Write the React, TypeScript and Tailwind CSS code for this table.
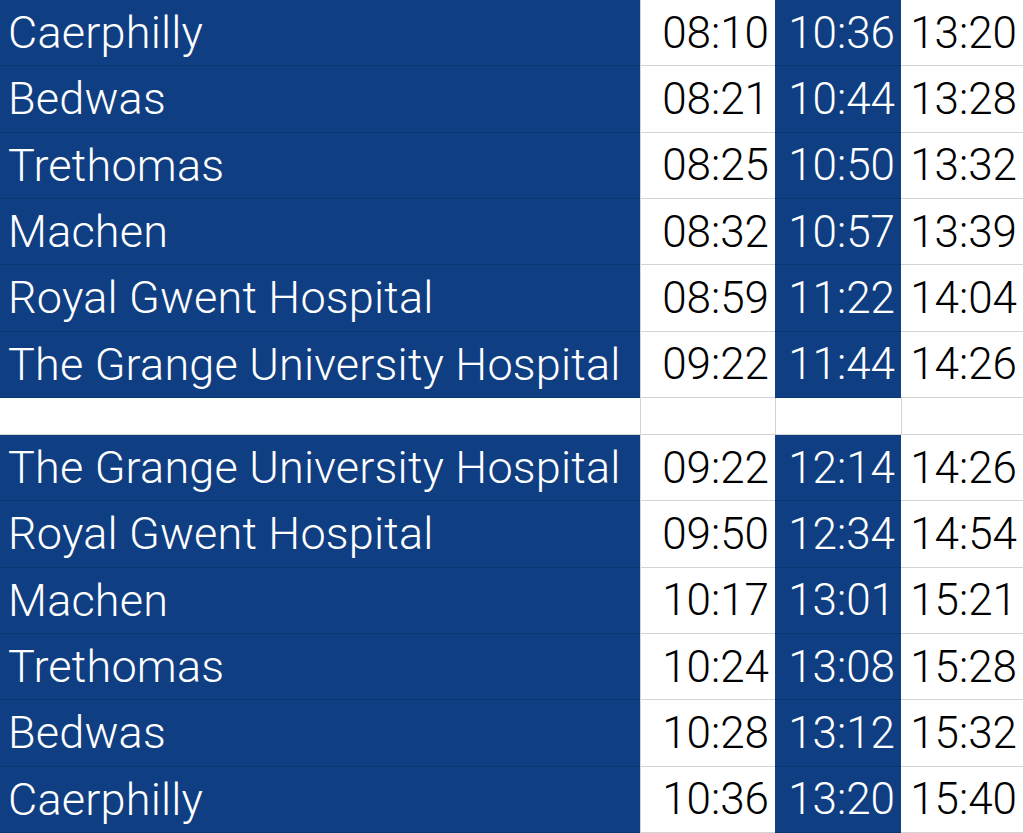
const outbound = [
  ["Caerphilly", "08:10", "10:36", "13:20"],
  ["Bedwas", "08:21", "10:44", "13:28"],
  ["Trethomas", "08:25", "10:50", "13:32"],
  ["Machen", "08:32", "10:57", "13:39"],
  ["Royal Gwent Hospital", "08:59", "11:22", "14:04"],
  ["The Grange University Hospital", "09:22", "11:44", "14:26"],
];

const inbound = [
  ["The Grange University Hospital", "09:22", "12:14", "14:26"],
  ["Royal Gwent Hospital", "09:50", "12:34", "14:54"],
  ["Machen", "10:17", "13:01", "15:21"],
  ["Trethomas", "10:24", "13:08", "15:28"],
  ["Bedwas", "10:28", "13:12", "15:32"],
  ["Caerphilly", "10:36", "13:20", "15:40"],
];

function Row({ cells }: { cells: string[] }) {
  return (
    <div className="grid grid-cols-[640px_135px_126px_123px] flex-1">
      <div className="bg-[#0f3e82] text-white text-[45px] tracking-[0.2px] border-b border-[#0c3670] pl-2 flex items-center whitespace-nowrap">
        {cells[0]}
      </div>
      <div className="bg-white text-black border-b border-l border-[#d4d4d4] pr-[6px] flex items-center justify-end">
        {cells[1]}
      </div>
      <div className="bg-[#0f3e82] text-white border-b border-[#0c3670] pr-[6px] flex items-center justify-end">
        {cells[2]}
      </div>
      <div className="bg-white text-black border-b border-r border-[#d4d4d4] pr-[6px] flex items-center justify-end">
        {cells[3]}
      </div>
    </div>
  );
}

export default function App() {
  return (
    <div className="w-[1024px] h-[833px] bg-white overflow-hidden flex flex-col text-[44px] leading-none font-light font-['Roboto',sans-serif]">
      {outbound.map((r, i) => (
        <Row key={"o" + i} cells={r} />
      ))}
      <div className="grid grid-cols-[640px_135px_126px_123px] h-[37px] shrink-0">
        <div className="border-b border-[#d4d4d4]" />
        <div className="border-b border-l border-[#d4d4d4]" />
        <div className="border-b border-l border-[#d4d4d4]" />
        <div className="border-b border-l border-r border-[#d4d4d4]" />
      </div>
      {inbound.map((r, i) => (
        <Row key={"i" + i} cells={r} />
      ))}
    </div>
  );
}
